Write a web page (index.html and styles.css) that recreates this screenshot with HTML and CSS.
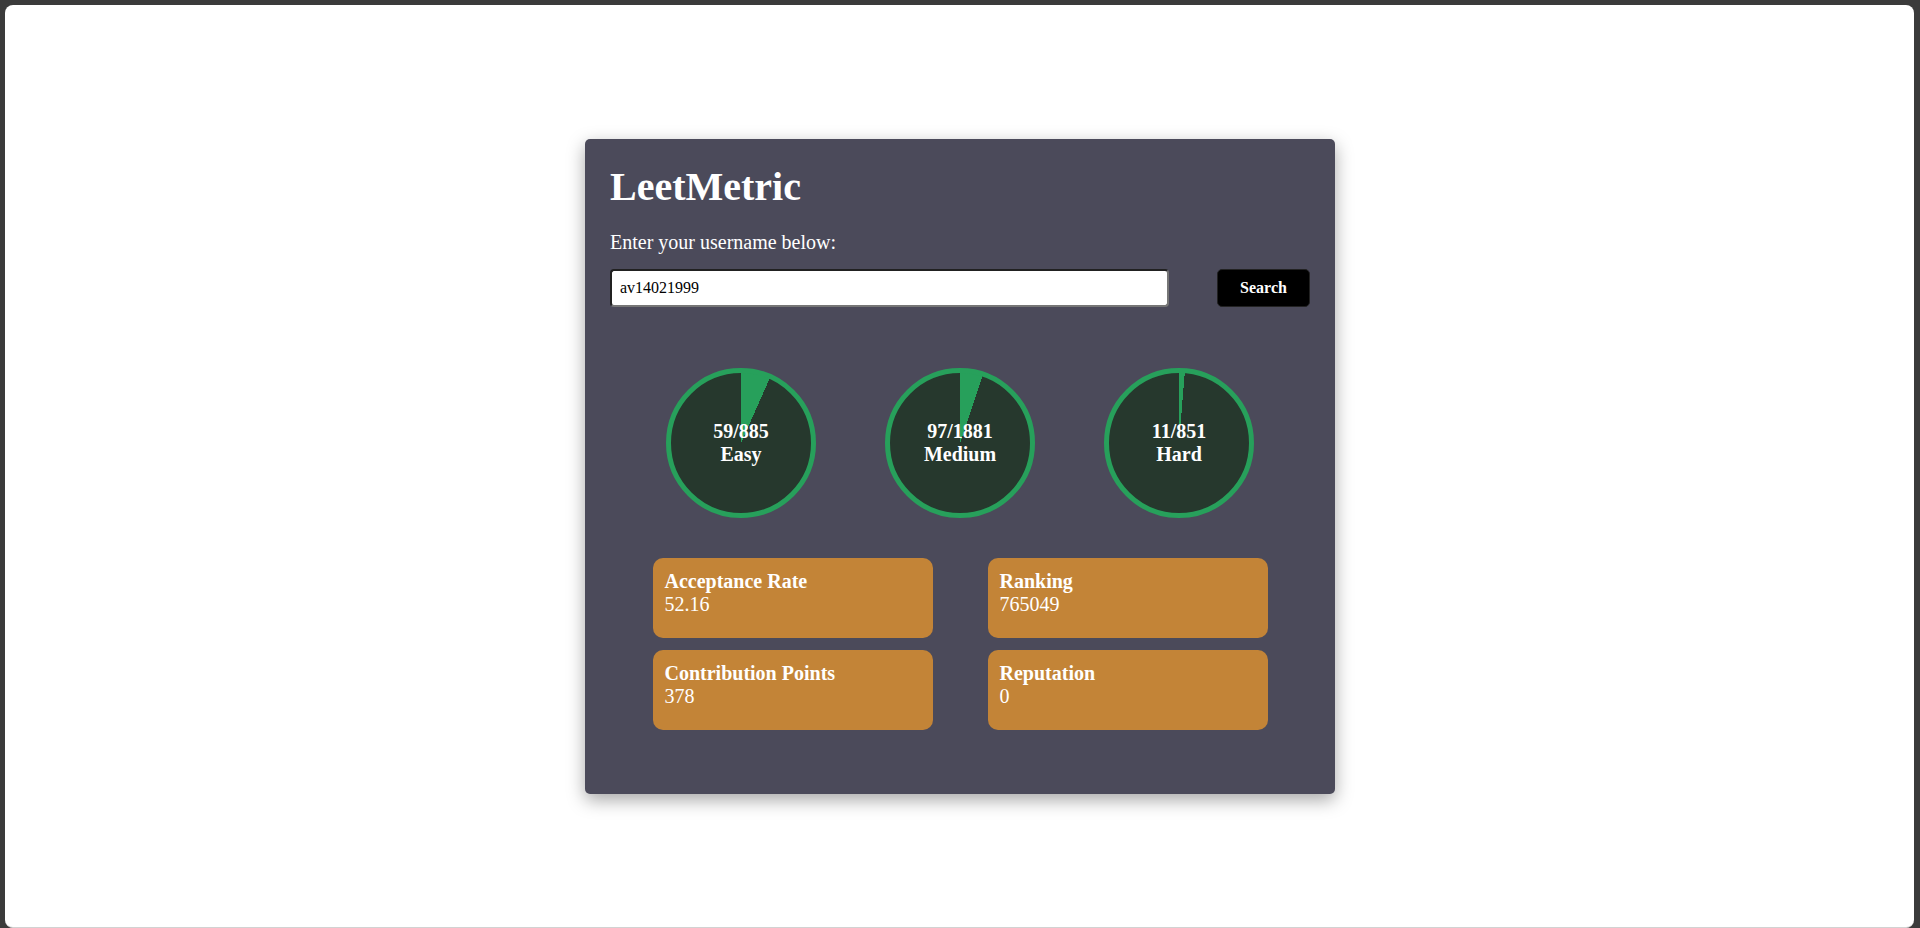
FILE: index.html
```html
<!DOCTYPE html>
<html lang="en">
<head>
<meta charset="UTF-8">
<title>LeetMetric</title>
<link rel="stylesheet" href="styles.css">
</head>
<body>
<div class="window">
  <div class="container">
    <h1 class="title">LeetMetric</h1>
    <p class="prompt">Enter your username below:</p>
    <div class="search-row">
      <input class="user-input" type="text" value="av14021999">
      <button class="search-btn">Search</button>
    </div>
    <div class="progress">
      <div class="circle" style="--deg: 24deg;">
        <span>59/885</span>
        <span>Easy</span>
      </div>
      <div class="circle" style="--deg: 18.6deg;">
        <span>97/1881</span>
        <span>Medium</span>
      </div>
      <div class="circle" style="--deg: 4.7deg;">
        <span>11/851</span>
        <span>Hard</span>
      </div>
    </div>
    <div class="stats">
      <div class="stat-card">
        <h4 class="stat-label">Acceptance Rate</h4>
        <p class="stat-value">52.16</p>
      </div>
      <div class="stat-card">
        <h4 class="stat-label">Ranking</h4>
        <p class="stat-value">765049</p>
      </div>
      <div class="stat-card">
        <h4 class="stat-label">Contribution Points</h4>
        <p class="stat-value">378</p>
      </div>
      <div class="stat-card">
        <h4 class="stat-label">Reputation</h4>
        <p class="stat-value">0</p>
      </div>
    </div>
  </div>
</div>
</body>
</html>
```
FILE: styles.css
```css
* { box-sizing: border-box; }

html, body {
  margin: 0;
  height: 928px;
  overflow: hidden;
}

body {
  background: #3b3b3b;
  padding: 5px 6px 0 5px;
  font-family: "Liberation Serif", "Times New Roman", serif;
}

.window {
  height: 923px;
  background: #ffffff;
  border-radius: 8px;
  border-bottom: 1px solid #d2d2d2;
  display: flex;
  align-items: center;
  justify-content: center;
}

.container {
  width: 750px;
  height: 655px;
  background: #4b4a5a;
  border-radius: 5px;
  padding: 25px 25px 25px;
  color: #ffffff;
  box-shadow: 0 6px 18px rgba(0, 0, 0, 0.35);
  margin-left: 1px;
}

.title {
  margin: 0;
  font-size: 40px;
  line-height: 46px;
  font-weight: bold;
}

.prompt {
  margin: 21px 0 0;
  font-size: 20px;
  line-height: 23px;
}

.search-row {
  margin-top: 15px;
  display: flex;
  justify-content: space-between;
  align-items: center;
}

.user-input {
  width: 559px;
  height: 38px;
  font-family: "Liberation Serif", "Times New Roman", serif;
  font-size: 16px;
  padding: 0 8px;
  border: 2px inset #767676;
  border-radius: 4px;
  background: #fff;
  color: #000;
}

.search-btn {
  width: 93px;
  height: 38px;
  background: #000;
  color: #fff;
  font-family: "Liberation Serif", "Times New Roman", serif;
  font-size: 16px;
  font-weight: bold;
  border: 1px solid #222;
  border-radius: 5px;
  padding: 0;
}

.progress {
  margin-top: 61px;
  display: flex;
  justify-content: center;
  gap: 69px;
}

.circle {
  width: 150px;
  height: 150px;
  border-radius: 50%;
  border: 5px solid #27a05b;
  background: conic-gradient(#27a05b 0deg var(--deg), #26382d var(--deg) 360deg);
  display: flex;
  flex-direction: column;
  align-items: center;
  justify-content: center;
  font-size: 20px;
  line-height: 23px;
  font-weight: bold;
}

.stats {
  margin-top: 40px;
  display: grid;
  grid-template-columns: 280px 280px;
  column-gap: 55px;
  row-gap: 12px;
  justify-content: center;
}

.stat-card {
  height: 80px;
  background: #c38437;
  border-radius: 10px;
  padding: 12px 12px;
}

.stat-label {
  margin: 0;
  font-size: 20px;
  line-height: 23px;
  font-weight: bold;
}

.stat-value {
  margin: 0;
  font-size: 20px;
  line-height: 23px;
}
```
